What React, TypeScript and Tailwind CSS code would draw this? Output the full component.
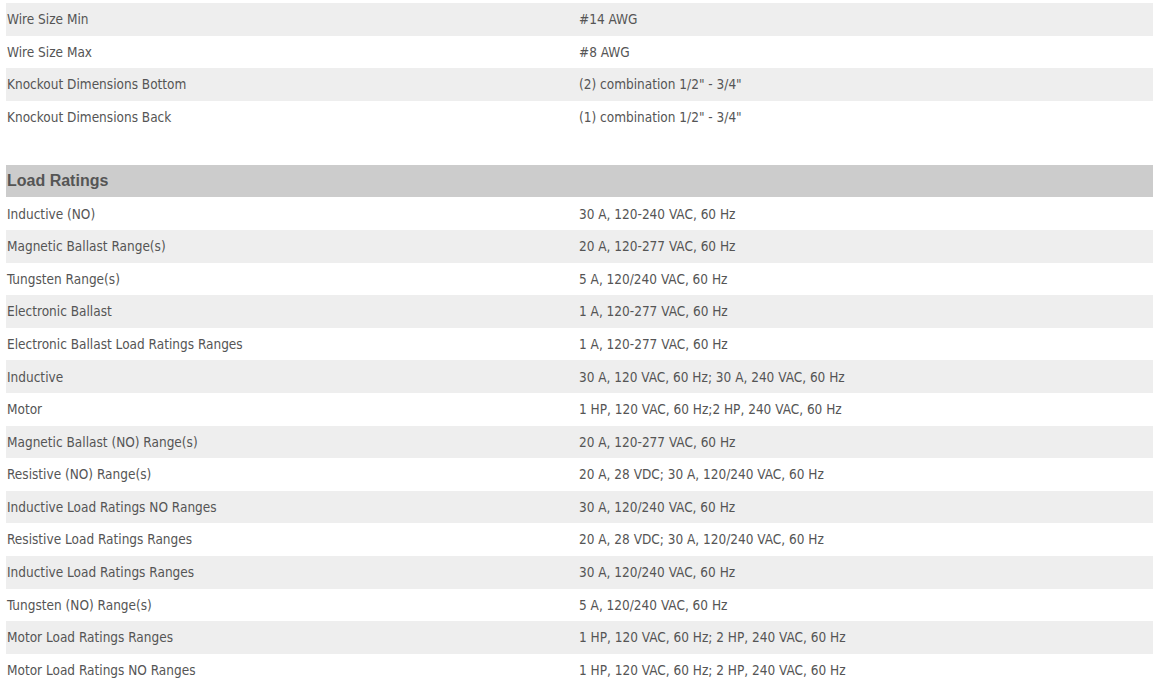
import React from 'react';

type Spec = { label: string; value: string };

const general: Spec[] = [
  { label: 'Wire Size Min', value: '#14 AWG' },
  { label: 'Wire Size Max', value: '#8 AWG' },
  { label: 'Knockout Dimensions Bottom', value: '(2) combination 1/2" - 3/4"' },
  { label: 'Knockout Dimensions Back', value: '(1) combination 1/2" - 3/4"' },
];

const loadRatings: Spec[] = [
  { label: 'Inductive (NO)', value: '30 A, 120-240 VAC, 60 Hz' },
  { label: 'Magnetic Ballast Range(s)', value: '20 A, 120-277 VAC, 60 Hz' },
  { label: 'Tungsten Range(s)', value: '5 A, 120/240 VAC, 60 Hz' },
  { label: 'Electronic Ballast', value: '1 A, 120-277 VAC, 60 Hz' },
  { label: 'Electronic Ballast Load Ratings Ranges', value: '1 A, 120-277 VAC, 60 Hz' },
  { label: 'Inductive', value: '30 A, 120 VAC, 60 Hz; 30 A, 240 VAC, 60 Hz' },
  { label: 'Motor', value: '1 HP, 120 VAC, 60 Hz;2 HP, 240 VAC, 60 Hz' },
  { label: 'Magnetic Ballast (NO) Range(s)', value: '20 A, 120-277 VAC, 60 Hz' },
  { label: 'Resistive (NO) Range(s)', value: '20 A, 28 VDC; 30 A, 120/240 VAC, 60 Hz' },
  { label: 'Inductive Load Ratings NO Ranges', value: '30 A, 120/240 VAC, 60 Hz' },
  { label: 'Resistive Load Ratings Ranges', value: '20 A, 28 VDC; 30 A, 120/240 VAC, 60 Hz' },
  { label: 'Inductive Load Ratings Ranges', value: '30 A, 120/240 VAC, 60 Hz' },
  { label: 'Tungsten (NO) Range(s)', value: '5 A, 120/240 VAC, 60 Hz' },
  { label: 'Motor Load Ratings Ranges', value: '1 HP, 120 VAC, 60 Hz; 2 HP, 240 VAC, 60 Hz' },
  { label: 'Motor Load Ratings NO Ranges', value: '1 HP, 120 VAC, 60 Hz; 2 HP, 240 VAC, 60 Hz' },
];

const SpecRow = ({ spec, shaded }: { spec: Spec; shaded: boolean }) => (
  <div className={`flex h-[32.6px] items-center ${shaded ? 'bg-[#eeeeee]' : 'bg-white'}`}>
    <div className="w-[572px] pl-px">{spec.label}</div>
    <div className="flex-1 pl-px">{spec.value}</div>
  </div>
);

export default function App() {
  return (
    <div className="min-h-screen bg-white pt-[3px] pl-[6px] text-[13.5px] text-[#555555] [font-family:'Liberation_Sans_Narrow','DejaVu_Sans_Condensed',sans-serif]">
      {general.map((spec, i) => (
        <SpecRow key={spec.label} spec={spec} shaded={i % 2 === 0} />
      ))}

      {/* Load ratings section */}
      <div className="mt-[32px] flex h-[32px] items-center bg-[#cccccc] pl-px text-[16px] font-bold text-[#555555] [font-family:'Liberation_Sans',Arial,sans-serif]">
        Load Ratings
      </div>
      {loadRatings.map((spec, i) => (
        <SpecRow key={spec.label} spec={spec} shaded={i % 2 === 1} />
      ))}
    </div>
  );
}
